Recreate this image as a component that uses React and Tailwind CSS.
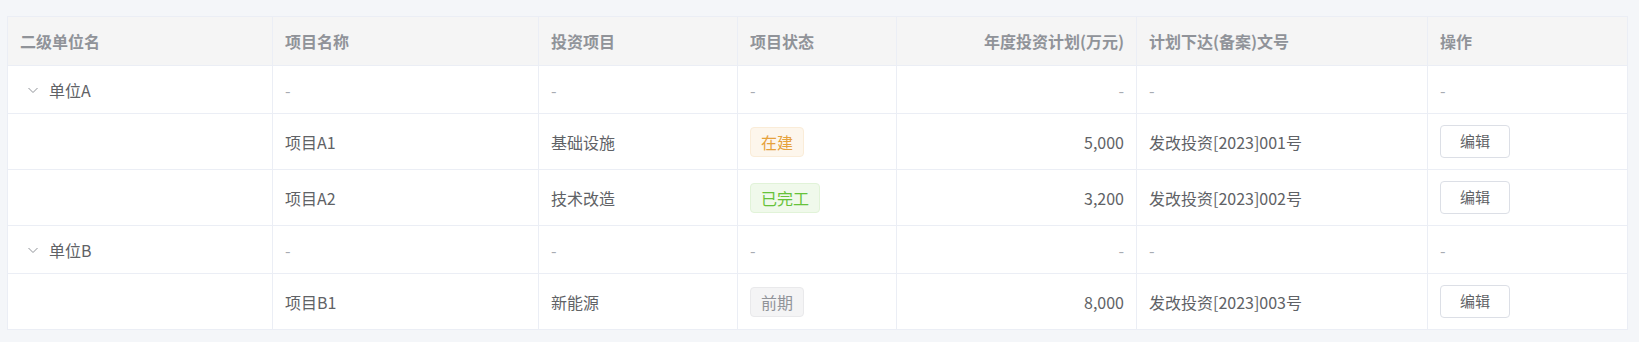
import React from 'react';

const cols = [
  { key: 'unit', title: '二级单位名', w: 'w-[265px]' },
  { key: 'name', title: '项目名称', w: 'w-[266px]' },
  { key: 'type', title: '投资项目', w: 'w-[199px]' },
  { key: 'status', title: '项目状态', w: 'w-[159px]' },
  { key: 'plan', title: '年度投资计划(万元)', w: 'w-[240px]', right: true },
  { key: 'doc', title: '计划下达(备案)文号', w: 'w-[291px]' },
  { key: 'op', title: '操作', w: 'w-[200px]' },
];

const groups = [
  {
    unit: '单位A',
    items: [
      { name: '项目A1', type: '基础设施', status: 'building', plan: '5,000', doc: '发改投资[2023]001号' },
      { name: '项目A2', type: '技术改造', status: 'done', plan: '3,200', doc: '发改投资[2023]002号' },
    ],
  },
  {
    unit: '单位B',
    items: [
      { name: '项目B1', type: '新能源', status: 'early', plan: '8,000', doc: '发改投资[2023]003号' },
    ],
  },
];

const tagStyle = {
  building: { label: '在建', cls: 'bg-[#fdf6ec] border-[#faecd8] text-[#e6a23c]' },
  done: { label: '已完工', cls: 'bg-[#f0f9eb] border-[#e1f3d8] text-[#67c23a]' },
  early: { label: '前期', cls: 'bg-[#f4f4f5] border-[#e9e9eb] text-[#909399]' },
};

const Tag = ({ status }) => {
  const t = tagStyle[status];
  return (
    <span className={`inline-flex items-center h-[30px] px-[10px] rounded-[4px] border ${t.cls}`}>
      {t.label}
    </span>
  );
};

const Dash = () => <span className="text-[#a8abb2]">-</span>;

const Chevron = () => (
  <svg width="12" height="12" viewBox="0 0 12 12" className="text-[#909399]">
    <polyline points="1.5,4 6,8.5 10.5,4" fill="none" stroke="currentColor" strokeWidth="1" />
  </svg>
);

const td = 'border border-[#ebeef5] px-3 align-middle';

const App = () => {
  return (
    <div
      className="w-full h-[342px] bg-[#f4f6f9] pt-4 pl-[7px]"
      style={{ fontFamily: '"Noto Sans CJK SC", "Noto Sans", sans-serif' }}
    >
      <table className="table-fixed border-collapse w-[1620px] bg-white text-[16px] text-[#606266]">
        <colgroup>
          {cols.map((c) => (
            <col key={c.key} className={c.w} />
          ))}
        </colgroup>
        <thead>
          <tr className="bg-[#f5f5f5]">
            {cols.map((c) => (
              <th
                key={c.key}
                className={`${td} h-[49px] font-bold text-[#909399] ${c.right ? 'text-right' : 'text-left'}`}
              >
                {c.title}
              </th>
            ))}
          </tr>
        </thead>
        <tbody>
          {groups.map((g) => (
            <React.Fragment key={g.unit}>
              <tr>
                <td className={`${td} h-[48px]`}>
                  <div className="flex items-center">
                    <span className="w-[29px] flex justify-center pr-[3px]">
                      <Chevron />
                    </span>
                    <span>{g.unit}</span>
                  </div>
                </td>
                <td className={td}><Dash /></td>
                <td className={td}><Dash /></td>
                <td className={td}><Dash /></td>
                <td className={`${td} text-right`}><Dash /></td>
                <td className={td}><Dash /></td>
                <td className={td}><Dash /></td>
              </tr>
              {g.items.map((it) => (
                <tr key={it.name}>
                  <td className={`${td} h-[56px]`}></td>
                  <td className={td}>{it.name}</td>
                  <td className={td}>{it.type}</td>
                  <td className={td}><Tag status={it.status} /></td>
                  <td className={`${td} text-right`}>{it.plan}</td>
                  <td className={td}>{it.doc}</td>
                  <td className={td}>
                    <button className="w-[70px] h-[33px] border border-[#dcdfe6] rounded-[4px] bg-white text-[#606266] text-[15px]">
                      编辑
                    </button>
                  </td>
                </tr>
              ))}
            </React.Fragment>
          ))}
        </tbody>
      </table>
    </div>
  );
};

export default App;
